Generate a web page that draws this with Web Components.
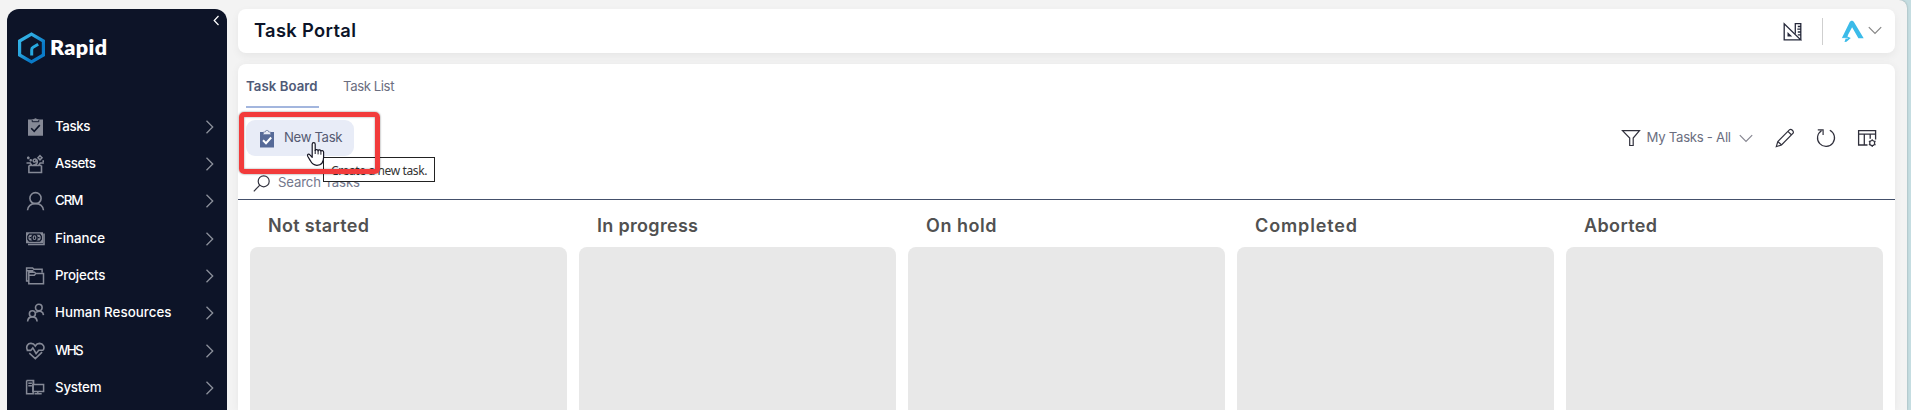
<!DOCTYPE html>
<html lang="en">
<head>
<meta charset="utf-8">
<title>Task Portal</title>
<style>
html, body { margin: 0; height: 100%; overflow: hidden; background: #c5dde1; }
</style>
</head>
<body>
<rapid-app></rapid-app>
<script>
const ICONS = {
  tasks: '<path fill="currentColor" d="M3 2.600h15V18.700H3z"/><path fill="currentColor" d="M7.500 4.500V2.200h1.600a1.500 1.500 0 0 1 2.800 0h1.600v2.300z"/><path d="M7.200 3v1.700h6.600V3" stroke="#0d1428" stroke-width=".9"/><path d="M6.200 11.300l3 3 5.600-6.200" stroke="#0d1428" stroke-width="1.600"/>',
  assets: '<path d="M3.900 11.500h2M14.500 11.500h2M3.900 11.500v7h12.600v-7M1.500 9h3.700l1.600 2.500h6.800L15.200 9h3.700M8 11.200c3.500-.5 4.500-2.500 4.300-4.200C12 4.700 9 4.300 8.300 6c-.5 1.300.6 2.300 1.700 2 1.200-.4 1-1.600.2-1.700" /><path d="M15 1.700L17 3.800l-2 2.100-2-2.100zM3.300 2.600v2.600M2 3.900h2.600M5.700 5v2.400M4.500 6.200h2.400M18.200 6.200v2"/>',
  crm: '<circle cx="10.500" cy="7.200" r="5.600"/><path d="M2.500 19.200c.2-4 3.600-6.800 8-6.800s7.800 2.800 8 6.800" />',
  finance: '<path fill="currentColor" d="M1 3.200h17v11H1z"/><path d="M19 4.500v11H3"/><path stroke="#0d1428" stroke-width="1.300" d="M4.300 5.200h10.500l1.500 2v3l-1.500 2H4.300l-1.500-2v-3z"/><ellipse cx="9.500" cy="8.700" rx="2.600" ry="3.100" stroke="#0d1428" stroke-width="1.400"/><path stroke="#0d1428" stroke-width="1.200" d="M4.600 8.700H6M13 8.700h1.500M9.500 7.500v2.400"/>',
  projects: '<path d="M3.800 15H1.600V1.900h6l1.300 1.300h8.200v3.200M1.600 4.800h6.800M3.800 17.700V6.300h5.700l1.300 1.300h7.700v10.100zM3.800 9.300h5.500l1.500-1.700" stroke-width="1.500"/>',
  hr: '<circle cx="13.800" cy="4.600" r="3.300"/><circle cx="7.400" cy="10.800" r="3"/><path d="M2.600 18.500c.2-2.900 2-4.600 4.800-4.600s4.500 1.700 4.700 4.600M11 9.400c3.900-2.500 7.200-.7 7.500 2.700"/>',
  whs: '<path d="M2.300 8.800C.6 5.300 3 2.200 6 2.400c2 .1 3.400 1.100 4.300 2.600.9-1.500 2.300-2.500 4.300-2.600 3.500 0 5.500 3.500 3.600 6.800M4.300 12.200l6 5.400 6.800-6.500M1.600 9.400h4.200l2-2.500 3.300 5.600 2.700-3.300h4.500" stroke-width="1.600"/>',
  system: '<path d="M1.600 2.500h7v4M1.600 2.500v13.300h6.600V2.500M3.300 5.300h3.600M3.300 7.800h3.600M7.800 6.600h10.800v7H7.800zM12.800 13.600v2.200M9.500 15.800h7.200" stroke-width="1.500"/>',
};

/* Shared base: clones a template string into an open shadow root. */
class Base extends HTMLElement {
  connectedCallback() {
    if (this.shadowRoot) return;
    const t = document.createElement('template');
    t.innerHTML = this.view();
    this.attachShadow({ mode: 'open' }).append(t.content.cloneNode(true));
    this.ready && this.ready();
  }
}

/* A one-line label whose tracking is adjusted to a nominal width. */
class UiLabel extends Base {
  view() {
    return `<style>:host{display:inline-block;white-space:nowrap;line-height:1.2}span{display:inline-block}</style><span><slot></slot></span>`;
  }
  ready() {
    const want = +this.getAttribute('w');
    const s = this.shadowRoot.querySelector('span');
    this.style.width = want + 'px';
    const n = this.textContent.length;
    s.style.letterSpacing = ((want - s.getBoundingClientRect().width) / (n - 1)).toFixed(3) + 'px';
  }
}

class RapidLogo extends Base {
  view() {
    return `<style>
      :host{display:flex;align-items:center;gap:5px;height:32px;color:#fff;font:800 21.500px Lato,sans-serif}
      svg{display:block}
    </style>
    <svg width="27" height="32" viewBox="0 0 27 32" fill="none">
      <defs><linearGradient id="g" x1="0" y1="0" x2="1" y2="1"><stop offset="0" stop-color="#35b6e8"/><stop offset=".35" stop-color="#2aa5de"/><stop offset=".7" stop-color="#0878c6"/><stop offset="1" stop-color="#0d80cc"/></linearGradient></defs>
      <path d="M13.500 2.200L25.400 9v14L13.500 29.800 1.600 23V9z" stroke="url(#g)" stroke-width="3.200"/>
      <path d="M13.700 23.500v-5.700q0-1.700 1.400-2.500l5.100-3" stroke="#27a8df" stroke-width="3"/>
    </svg><ui-label w="57">Rapid</ui-label>`;
  }
}

class NavItem extends Base {
  view() {
    return `<style>
      :host{display:flex;align-items:center;height:37.33px;padding:0 13.500px 0 18px;color:#fff;font:500 13.300px Inter,sans-serif}
      .i{width:20px;height:20px;color:#858996;margin-right:10px;flex:none}
      .c{width:9px;height:14px;margin-left:auto;color:#8c909b}
    </style>
    <svg class="i" viewBox="0 0 20 20" fill="none" stroke="currentColor" stroke-width="1.600">${ICONS[this.getAttribute('icon')].replace(/<path fill="currentColor"/g, '<path stroke="none" fill="currentColor"')}</svg>
    <ui-label w="${this.getAttribute('w')}">${this.getAttribute('label')}</ui-label>
    <svg class="c" viewBox="0 0 9 14" fill="none" stroke="currentColor" stroke-width="1.300"><path d="M1.500.8L7.700 7l-6.200 6.200"/></svg>`;
  }
}

class SideNav extends Base {
  view() {
    const items = [['tasks','Tasks',35.5],['assets','Assets',41],['crm','CRM',28.5],['finance','Finance',50],['projects','Projects',50.5],['hr','Human Resources',116.5],['whs','WHS',28.5],['system','System',46.5]];
    return `<style>
      :host{display:block;width:220px;background:#0d1428;border-radius:12px 12px 0 0;box-sizing:border-box;overflow:hidden}
      header{display:flex;justify-content:space-between;align-items:flex-start;height:98.900px;padding:0 7px 0 11px;box-sizing:border-box}
      rapid-logo{margin-top:23px}
      header svg{margin-top:6px}
    </style>
    <header><rapid-logo></rapid-logo>
    <svg width="7" height="11" viewBox="0 0 7 11" fill="none" stroke="#fff" stroke-width="1.200"><path d="M5.500 1L1.200 5.500l4.300 4.500"/></svg></header>
    <nav>${items.map(([i,l,w]) => `<nav-item icon="${i}" label="${l}" w="${w}"></nav-item>`).join('')}</nav>`;
  }
}

class TopBar extends Base {
  view() {
    return `<style>
      :host{display:flex;align-items:center;height:44px;padding:0 13px 0 16px;box-sizing:border-box;background:#fff;border-radius:8px;box-shadow:0 3px 8px rgba(0,0,0,.055);color:#0c1428;font:600 18.300px Inter,sans-serif}
      .tool{margin-left:auto}
      i{width:1px;height:27px;background:#cfcfcf;margin:0 18px 0 20px}
      .v{margin-left:4px;position:relative;top:-1px}
    </style>
    <ui-label w="102">Task Portal</ui-label>
    <svg class="tool" width="19" height="19" viewBox="0 0 19 19" fill="none" stroke="#25283a" stroke-width="1.300">
      <path d="M1.200 1.800v16h16.500z"/><path d="M12.300 11.800V1.700h5.500v16M17.800 4.500h-3M17.800 7.200h-3.500M17.800 10h-3M17.800 12.800h-3"/><path d="M4.500 10v4.500h4.700z" fill="#25283a" stroke="none"/></svg>
    <i></i>
    <svg width="23" height="24" viewBox="0 0 23 24"><path fill="#3bbbe9" d="M8.600 3.200C9.700 1.200 12 1.200 13.100 3.200L22.700 19.200h-5.300L11.100 8.200 7.200 15.500 5.800 19.200H.8z"/><path fill="#3bbbe9" d="M4.600 16.800L9.800 19 5.500 22.800l-2 .2 1-3z"/><path d="M.8 19.400l6-.1" stroke="#fff" stroke-width=".7"/></svg>
    <svg class="v" width="14" height="9" viewBox="0 0 14 9" fill="none" stroke="#858585" stroke-width="1.200"><path d="M.8 1.200L7 7.400l6.200-6.200"/></svg>`;
  }
}

class TabStrip extends Base {
  view() {
    return `<style>
      :host{display:flex;gap:24px;height:44px;padding-left:8px;color:#6b6e80;font:400 13.200px Inter,sans-serif}
      div{box-sizing:border-box;height:44px;padding:14px 0 0}
      .on{width:73px;border-bottom:2px solid #a3b6de;color:#505a78;font-weight:600}
    </style>
    <div class="on"><ui-label w="71.500">Task Board</ui-label></div><div><ui-label w="51.500">Task List</ui-label></div>`;
  }
}

class NewTaskButton extends Base {
  view() {
    return `<style>
      :host{position:relative;display:flex;align-items:center;width:108px;height:36px;box-sizing:border-box;padding-left:13px;gap:9px;border-radius:9px;background:#e8ecf7;color:#555a72;font:400 13.200px Inter,sans-serif}
      .tip{position:absolute;left:77px;top:37px;width:112px;height:25px;box-sizing:border-box;border:1px solid #222;background:#fff;color:#333;padding:3.500px 0 0 7px;font:400 12px "Noto Sans",sans-serif}
      .mark{position:absolute;left:-7px;top:-8px;width:141px;height:62px;box-sizing:border-box;border:5px solid #f23b3b;border-radius:5px;box-shadow:0 0 2px rgba(0,0,0,.55),inset 0 0 2px rgba(0,0,0,.45)}
      .cur{position:absolute;left:60px;top:22px}
    </style>
    <svg width="16" height="19" viewBox="0 0 16 19"><path fill="#566a98" d="M1 3h14v15.500H1z"/><path d="M4.500 5.500V3H6.300a1.700 1.700 0 0 1 3.400 0h1.800v2.500z" fill="#e8ecf7" stroke="#7886aa" stroke-width=".8"/><path d="M4 11.300l3 2.900 5.200-5.700" fill="none" stroke="#fff" stroke-width="2"/></svg>
    <ui-label w="58.500">New Task</ui-label>
    <div class="tip"><ui-label w="96.500">Create a new task.</ui-label></div>
    <div class="mark"></div>
    <svg class="cur" width="20" height="24" viewBox="0 0 20 24"><path fill="#fff" stroke="#171725" stroke-width="1.200" stroke-linejoin="round" d="M6.200 2.200c0-2 3-2 3 0v6.300c0-1.300 2.800-1.300 2.900.3 0-1.300 2.700-1.100 2.800.5.200-1.100 2.700-.9 2.700.8v5.200c0 5-2.200 8-6.700 8-3.600 0-5.300-2-6.600-4.700L1.700 14.300c-.8-1.900 1-2.800 2.200-1.500l2.300 2.600z"/><path stroke="#171725" d="M9.200 8v4M12.100 8.800v3.600M14.900 9.500v3.200"/></svg>`;
  }
}

class BoardTools extends Base {
  view() {
    return `<style>
      :host{display:flex;align-items:center;margin-left:auto;color:#6b6e80;font:400 13.200px Inter,sans-serif}
      svg{display:block;fill:none;stroke:#30303c;stroke-width:1.200}
    </style>
    <svg width="20" height="18" viewBox="0 0 20 18"><path d="M1.500 1.600h17L12.200 9v7.500H8.700V9z"/></svg>
    <ui-label w="84.500" style="margin-left:6px">My Tasks - All</ui-label>
    <svg width="14" height="9" viewBox="0 0 14 9" style="margin-left:8px;stroke:#858590"><path d="M.8 1.200L7 7.400l6.200-6.200"/></svg>
    <svg width="20" height="20" viewBox="0 0 20 20" style="margin-left:22px"><path d="M1.300 18.700l1.500-5.200L14.600 1.700c1.600-1.300 4.600 1.500 3.500 3.500L6.500 17zM12.900 3.300l3.700 3.700M2.800 13.500l3.700 3.500"/></svg>
    <svg width="20" height="20" viewBox="0 0 20 20" style="margin-left:21px"><path d="M13.800 2.300A8.500 8.500 0 1 1 5.500 2.700M1.800 1.900h5.300v5.200"/></svg>
    <svg width="20" height="19" viewBox="0 0 20 19" style="margin-left:21px"><path d="M10.500 16H1.600V1.600h17v9M1.600 5.200h17M7.300 5.200V16M13.200 5.200v4.500" stroke-width="1.300"/><circle cx="15.200" cy="14" r="2.500"/><path d="M15.200 10.200v1.200M15.200 16.600v1.300M11.900 12.100l1 .6M17.500 15.300l1 .6M11.900 15.900l1-.6M17.500 12.700l1-.6"/></svg>`;
  }
}

class SearchBox extends Base {
  view() {
    return `<style>
      :host{display:flex;align-items:flex-start;gap:8px;height:44px;padding:19px 0 0 15px;box-sizing:border-box;border-bottom:1px solid #44506b;color:#73778c;font:400 13.200px Inter,sans-serif}
    </style>
    <svg width="17" height="17" viewBox="0 0 17 17" fill="none" stroke="#33333f" stroke-width="1.200"><circle cx="10.700" cy="6.300" r="5.500"/><path d="M6.800 10.200L.8 16.400"/></svg>
    <ui-label w="82">Search Tasks</ui-label>`;
  }
}

class BoardColumn extends Base {
  view() {
    return `<style>
      :host{display:flex;flex-direction:column;min-width:0;font:600 18px Inter,sans-serif;color:#515151}
      .h{height:47px;padding:15px 0 0 18px;box-sizing:border-box}
      .b{flex:1;background:#e8e8e8;border-radius:8px 8px 0 0}
    </style>
    <div class="h"><ui-label w="${this.getAttribute('w')}">${this.getAttribute('label')}</ui-label></div><div class="b"></div>`;
  }
}

class TaskBoard extends Base {
  view() {
    const cols = [['Not started',101],['In progress',101],['On hold',70.5],['Completed',102],['Aborted',73]];
    return `<style>
      :host{display:flex;flex-direction:column;background:#fff;border-radius:8px 8px 0 0;box-shadow:0 1px 8px rgba(0,0,0,.055);min-height:0}
      .bar{display:flex;align-items:center;height:36px;margin-top:12px;padding:0 18px 0 8px;position:relative;z-index:1}
      .cols{flex:1;display:grid;grid-template-columns:repeat(5,1fr);gap:11.600px;padding:0 11.500px 0 12px}
    </style>
    <tab-strip></tab-strip>
    <div class="bar"><new-task-button></new-task-button><board-tools></board-tools></div>
    <search-box></search-box>
    <div class="cols">${cols.map(([l,w]) => `<board-column label="${l}" w="${w}"></board-column>`).join('')}</div>`;
  }
}

class RapidApp extends Base {
  view() {
    return `<style>
      :host{display:flex;gap:11px;height:410px;width:1907px;box-sizing:border-box;padding:9px 12px 0 7px;background:#f3f3f3;border-radius:0 8px 0 0;box-shadow:0 0 2px rgba(0,0,0,.3)}
      main{flex:1;display:flex;flex-direction:column;gap:11px;min-width:0}
      task-board{flex:1}
    </style>
    <side-nav></side-nav><main><top-bar></top-bar><task-board></task-board></main>`;
  }
}

const defs = { 'ui-label': UiLabel, 'rapid-logo': RapidLogo, 'nav-item': NavItem, 'side-nav': SideNav, 'top-bar': TopBar, 'tab-strip': TabStrip, 'new-task-button': NewTaskButton, 'board-tools': BoardTools, 'search-box': SearchBox, 'board-column': BoardColumn, 'task-board': TaskBoard, 'rapid-app': RapidApp };
for (const [name, cls] of Object.entries(defs)) customElements.define(name, cls);
</script>
</body>
</html>
